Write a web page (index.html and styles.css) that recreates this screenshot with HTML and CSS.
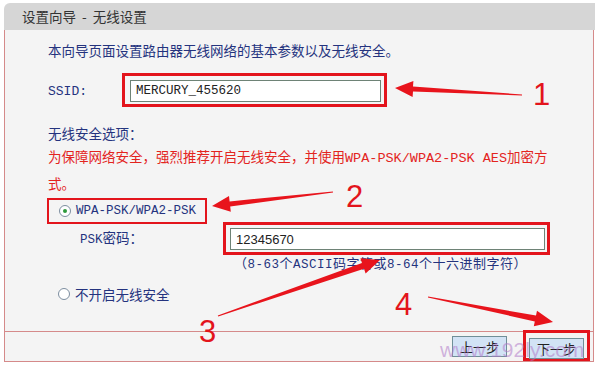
FILE: index.html
```html
<!DOCTYPE html>
<html lang="zh-CN">
<head>
    <meta charset="UTF-8">
    <title>设置向导 - 无线设置</title>
    <link rel="stylesheet" href="styles.css">
</head>
<body>
    <div class="wizard">
        <div class="wizard-head">设置向导 - 无线设置</div>
        <div class="wizard-body">
            <div class="content">
                <p class="intro">本向导页面设置路由器无线网络的基本参数以及无线安全。</p>

                <div class="row ssid-row">
                    <label class="label ssid-label"><span class="mono">SSID:</span></label>
                    <div class="mark">
                        <input class="field ssid-field" value="MERCURY_455620">
                    </div>
                </div>

                <p class="section">无线安全选项：</p>
                <p class="warn">为保障网络安全，强烈推荐开启无线安全，并使用<span class="mono">WPA-PSK/WPA2-PSK AES</span>加密方式。</p>

                <div class="mark option-mark">
                    <span class="radio checked"></span>
                    <span class="mono option-text">WPA-PSK/WPA2-PSK</span>
                </div>

                <div class="row psk-row">
                    <label class="label psk-label"><span class="mono">PSK</span>密码：</label>
                    <div class="mark">
                        <input class="field psk-field" value="12345670">
                    </div>
                </div>
                <p class="hint">（<span class="mono">8-63</span>个<span class="mono">ASCII</span>码字符或<span class="mono">8-64</span>个十六进制字符）</p>

                <div class="option off-option">
                    <span class="radio"></span>
                    <span class="option-text">不开启无线安全</span>
                </div>
            </div>

            <div class="wizard-foot">
                <button class="btn">上一步</button>
                <div class="mark btn-mark">
                    <button class="btn">下一步</button>
                </div>
            </div>
        </div>
    </div>

    <svg class="notes" width="600" height="366" viewBox="0 0 600 366">
        <g fill="#e8141c">
            <polygon points="522,94.5 413,86.5 413.4,81 395,88 412.6,97 413,91.5 522,95.5"/>
            <polygon points="332.9,191.5 229.6,201.4 229,196 212,206 230.8,211.8 230.2,206.4 333.1,192.5"/>
            <polygon points="218.2,316.5 364,268.7 365.6,273.5 380,260 360.4,258.3 362,263.1 217.8,315.5"/>
            <polygon points="427.9,297.5 534.8,321.4 533.8,326.3 553,322 537,310.7 536,315.6 428.1,296.5"/>
        </g>
        <g class="num">
            <text x="533" y="105">1</text>
            <text x="346" y="207">2</text>
            <text x="199" y="342">3</text>
            <text x="395" y="315">4</text>
        </g>
        <text class="watermark" x="440" y="357">www.192ly.com</text>
    </svg>
</body>
</html>
```

FILE: styles.css
```css
body {
    margin: 0;
    background-color: #fff;
    position: relative;
    width: 600px;
    height: 366px;
    overflow: hidden;
}
* {
    font-family: "Noto Sans CJK SC", "Liberation Sans", sans-serif;
    box-sizing: border-box;
}
.mono {
    font-family: "Liberation Mono", "Noto Sans CJK SC", monospace;
}

.wizard {
    margin: 3px 0 0 4px;
    width: 591px;
}
.wizard-head {
    height: 27px;
    line-height: 27px;
    padding-left: 18px;
    background-color: #d6d6d6;
    border-top-left-radius: 6px;
    color: #333;
    font-size: 13.5px;
    word-spacing: 3px;
}
.wizard-body {
    width: 590px;
    background-color: #f4f4f4;
    border: 1px solid #d58a8a;
    border-top: none;
}
.content {
    padding: 10px 0 0 43px;
    height: 301px;
    color: #24337e;
    font-size: 13.5px;
}
.content p {
    margin: 0;
}
.intro {
    line-height: 20px;
}

.row {
    display: flex;
    align-items: center;
}
.mark {
    border: 3px solid #e3141c;
}
.label {
    line-height: 20px;
}
.ssid-row {
    margin-top: 13px;
}
.ssid-label {
    width: 74px;
}
.ssid-label .mono {
    font-size: 13px;
}
.ssid-row .mark {
    padding: 4px 3px 2px 5px;
}
.field {
    display: block;
    height: 22px;
    border: 1px solid #6e8376;
    background: #fff;
    padding: 0 0 0 5px;
    font-size: 12.5px;
    color: #222;
    outline: none;
}
.ssid-field {
    width: 251px;
    font-family: "Liberation Mono", monospace;
}

.section {
    margin-top: 16px !important;
    line-height: 20px;
}
.warn {
    margin-top: 1px !important;
    width: 510px;
    line-height: 24px;
    color: #e3241e;
}
.warn .mono {
    font-size: 13.5px;
}

.option-mark {
    display: flex;
    align-items: center;
    width: 160px;
    height: 26px;
    margin: 3px 0 0 -1px;
    padding-left: 10px;
    border-width: 2px;
}
.radio {
    display: inline-block;
    position: relative;
    width: 12px;
    height: 12px;
    border: 1px solid #7d8ea0;
    border-radius: 50%;
    background: #fff;
    flex-shrink: 0;
}
.radio.checked::after {
    content: "";
    position: absolute;
    left: 3px;
    top: 3px;
    width: 4px;
    height: 4px;
    border-radius: 50%;
    background: #2f9a3c;
}
.option-text {
    margin-left: 5px;
}
.option-mark .option-text {
    font-size: 12.5px;
}

.psk-row {
    margin-top: -2px;
    margin-left: 32px;
}
.psk-label {
    width: 143px;
}
.psk-label .mono {
    font-size: 12.5px;
}
.psk-row .mark {
    width: 327px;
    padding: 3px 2px 2px 4px;
}
.psk-field {
    width: 315px;
    font-family: "Liberation Sans", sans-serif;
    font-size: 13px;
}
.hint {
    margin-left: 186px !important;
    line-height: 16px;
    font-size: 13px;
    letter-spacing: 0.5px;
}
.hint .mono {
    font-size: 12.5px;
}

.off-option {
    display: flex;
    align-items: center;
    margin-top: 11px;
    padding-left: 10px;
    line-height: 20px;
}

.wizard-foot {
    display: flex;
    justify-content: flex-end;
    align-items: center;
    gap: 16px;
    height: 30px;
    padding-right: 3px;
    border-top: 1px solid #d58a8a;
}
.btn {
    width: 55px;
    height: 21px;
    padding: 0;
    background-color: #d2e3f5;
    border: 1px solid #6f8f98;
    color: #222;
    font-size: 13px;
    line-height: 19px;
}
.btn-mark {
    height: 31px;
    margin-top: -2px;
    padding: 2px 3px 0 3px;
}

.notes {
    position: absolute;
    left: 0;
    top: 0;
    pointer-events: none;
}
.num text {
    font-family: "Liberation Sans", sans-serif;
    font-size: 31px;
    fill: #e3141c;
}
.watermark {
    font-family: "Liberation Sans", sans-serif;
    font-size: 21px;
    fill: rgba(176, 120, 200, 0.55);
}
```
